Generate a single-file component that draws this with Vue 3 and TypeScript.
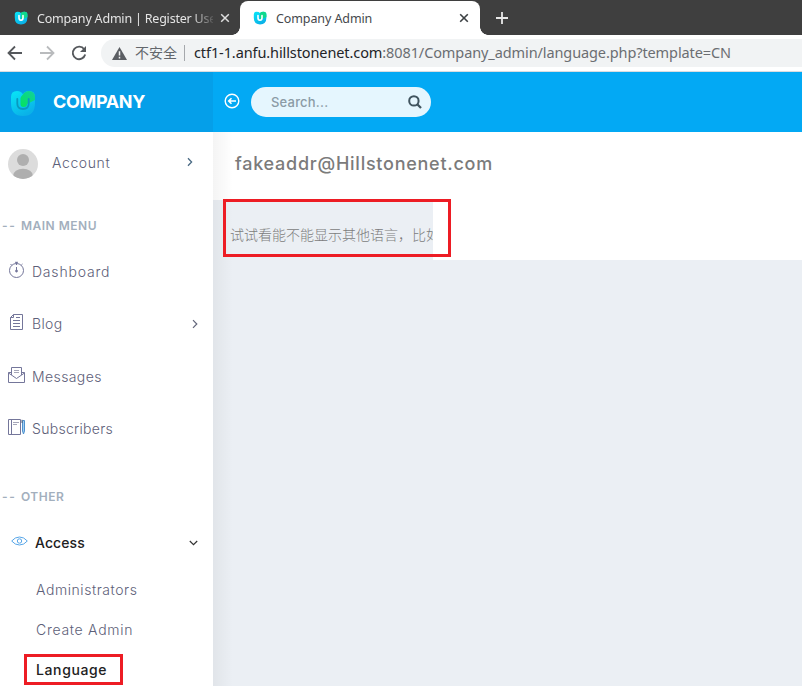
<script setup lang="ts">
interface MenuItem {
  label: string
  icon: 'clock' | 'doc' | 'mail' | 'book'
  cls: string
  arrow?: boolean
}

const mainMenu: MenuItem[] = [
  { label: 'Dashboard', icon: 'clock', cls: 't-dashboard' },
  { label: 'Blog', icon: 'doc', cls: 't-blog', arrow: true },
  { label: 'Messages', icon: 'mail', cls: 't-messages' },
  { label: 'Subscribers', icon: 'book', cls: 't-subscribers' },
]
</script>

<template>
  <div class="window">
    <svg class="defs" width="0" height="0">
      <defs>
        <linearGradient id="cup" x1="0" y1="0" x2="0.5" y2="1">
          <stop offset="0" stop-color="#08e6f7" />
          <stop offset="1" stop-color="#0ab2e8" />
        </linearGradient>
        <linearGradient id="leaf" x1="1" y1="0" x2="0" y2="1">
          <stop offset="0" stop-color="#13cf9e" />
          <stop offset="1" stop-color="#04e35c" />
        </linearGradient>
        <symbol id="fav" viewBox="0 0 14 14">
          <path d="M.8 3.5Q.8.8 3.6.8 6 .8 7 2 8 .8 10.5.8 13.4.8 13.4 3.6V6.5Q13.4 13.4 7 13.4T.8 6.5Z" fill="url(#cup)" />
          <path d="M7 2Q8 .8 10.5.8 13.4.8 13.4 4V6L9 8H7Z" fill="#10d98c" />
          <path d="M5 4.5V7Q5 9.2 7 9.2T9 7V4.5" fill="none" stroke="#fff" stroke-width="1.6" stroke-linecap="round" />
        </symbol>
      </defs>
    </svg>

    <header class="tabs">
      <div class="tab">
        <svg class="fav" width="14" height="14"><use href="#fav" /></svg>
        <span class="tab-title old">Company Admin | Register Use</span>
        <svg class="close" width="10" height="10" viewBox="0 0 10 10"><path d="M1.2 1.2 8.8 8.8M8.8 1.2 1.2 8.8" stroke="#dedede" stroke-width="1.5" /></svg>
      </div>
      <div class="tab active">
        <svg class="fav" width="14" height="14"><use href="#fav" /></svg>
        <span class="tab-title">Company Admin</span>
        <svg class="close" width="10" height="10" viewBox="0 0 10 10"><path d="M1.2 1.2 8.8 8.8M8.8 1.2 1.2 8.8" stroke="#3c4043" stroke-width="1.6" /></svg>
      </div>
      <svg class="plus" width="12" height="12" viewBox="0 0 12 12"><path d="M6 0V12M0 6H12" stroke="#e8e8e8" stroke-width="1.8" /></svg>
    </header>

    <div class="toolbar">
      <svg class="nav-icon" width="16" height="16" viewBox="0 0 16 16"><path d="M15 8H2M8 1.5 1.5 8 8 14.5" fill="none" stroke="#55585c" stroke-width="1.8" /></svg>
      <svg class="nav-icon" width="16" height="16" viewBox="0 0 16 16"><path d="M1 8H14M8 1.5 14.5 8 8 14.5" fill="none" stroke="#b9bbbd" stroke-width="1.8" /></svg>
      <svg class="nav-icon" width="16" height="16" viewBox="0 0 16 16"><path d="M13.2 4.2A6.3 6.3 0 1 0 14.2 9.6" fill="none" stroke="#55585c" stroke-width="1.9" /><path d="M15 1V7H9Z" fill="#55585c" /></svg>
      <div class="omnibox">
        <svg width="15" height="13" viewBox="0 0 15 13"><path d="M7.5 0 15 13H0Z" fill="#5b5e63" /><path d="M7.5 4.3V8.6M7.5 9.8V11.4" stroke="#f1f3f4" stroke-width="1.5" /></svg>
        <span class="insecure">不安全</span>
        <i class="divider"></i>
        <span class="url"><b>ctf1-1.anfu.hillstonenet.com</b>:8081/Company_admin/language.php?template=CN</span>
      </div>
    </div>

    <div class="app">
      <aside class="sidebar">
        <div class="brand">
          <svg width="26" height="27" viewBox="0 0 26 27">
            <path d="M1 7Q1 1 7 1 11.5 1 13 4.5 14.5 1 19 1 25 1 25 7V13Q25 26 13 26T1 13Z" fill="url(#cup)" />
            <path d="M13 4.5Q15 1 19 1 25 1 25 7.5V10L17 14Q17 17 13.5 17 10.5 17 10.5 14V8Q11 6 13 4.5Z" fill="url(#leaf)" />
            <path d="M7.3 9V13.5Q7.3 19 13 19T18.7 13.5V9" fill="none" stroke="#0999bf" stroke-width="1.8" stroke-linecap="round" />
          </svg>
          <span class="brand-name">COMPANY</span>
        </div>

        <div class="account">
          <svg width="30" height="30" viewBox="0 0 30 30">
            <clipPath id="face"><circle cx="15" cy="15" r="15" /></clipPath>
            <g clip-path="url(#face)"><rect width="30" height="30" fill="#dcdcdc" /><circle cx="15" cy="11" r="6" fill="#afafaf" /><ellipse cx="15" cy="27" rx="10" ry="7.3" fill="#afafaf" /></g>
          </svg>
          <span class="label t-account">Account</span>
          <svg class="chev acc" width="6" height="10" viewBox="0 0 6 10"><path d="M1 1.2 4.6 5 1 8.8" fill="none" stroke="#4a6a84" stroke-width="1.3" /></svg>
        </div>

        <h4 class="heading h-main"><span class="dashes">--</span>MAIN MENU</h4>
        <nav>
          <div v-for="item in mainMenu" :key="item.label" class="row">
            <svg class="icon" width="18" height="18" viewBox="0 0 18 18" fill="none" stroke="#74769a" stroke-width="1">
              <template v-if="item.icon === 'clock'">
                <circle cx="8.5" cy="9.5" r="7" /><path d="M8.5 1V4M7 1.3H10M8.5 6V11M2.5 3 3.8 4.3M14.5 3 13.2 4.3" /><circle cx="8.5" cy="10" r="1" />
              </template>
              <template v-else-if="item.icon === 'doc'">
                <path d="M5.5 1.5H14.5V16.5H2.5V4.5ZM5.5 1.5V4.5H2.5M5 7.5H12M5 10.5H12M5 13.5H12M8 4.5H12" />
              </template>
              <template v-else-if="item.icon === 'mail'">
                <path d="M3 6.5H.5V16.5H16.5V6.5H14M3.5 9V1.5H13.5V9M.5 7 8.5 12.5 16.5 7" /><path d="M6 4.5H11M6 6.5H11" stroke="#a5a6b8" />
              </template>
              <template v-else>
                <path d="M.5 1.5H12.5V16.5H.5ZM3.5 1.5V16.5" /><path d="M5 4.5H11M5 6.5H9" stroke="#a5a6b8" /><path d="M14.5 2.5H16.5V13L15.5 16 14.5 13Z" stroke="#4d92cf" fill="#a5cdf0" /><path d="M14 1.8V5" stroke="#555b73" />
              </template>
            </svg>
            <span class="label" :class="item.cls">{{ item.label }}</span>
            <svg v-if="item.arrow" class="chev" width="6" height="10" viewBox="0 0 6 10"><path d="M1 1.2 4.8 5 1 8.8" fill="none" stroke="#62657a" stroke-width="1.2" /></svg>
          </div>
        </nav>

        <h4 class="heading h-other"><span class="dashes">--</span>OTHER</h4>
        <div class="row access">
          <svg width="17" height="10" viewBox="0 0 17 10" fill="none" stroke="#58a6e8"><path d="M.7 5Q4 1 8.5 1T16.3 5Q13 9 8.5 9T.7 5Z" /><circle cx="8.5" cy="5" r="2.2" /></svg>
          <span class="label strong t-access">Access</span>
          <svg class="chev down" width="9" height="6" viewBox="0 0 9 6"><path d="M.8 1 4.5 4.7 8.2 1" fill="none" stroke="#333" stroke-width="1.2" /></svg>
        </div>
        <div class="sub"><span class="label t-administrators">Administrators</span></div>
        <div class="sub"><span class="label t-create">Create Admin</span></div>
        <div class="sub">
          <span class="label strong t-language">Language</span>
          <i class="mark mark-language"></i>
        </div>
      </aside>

      <main class="main">
        <div class="topbar">
          <svg width="16" height="16" viewBox="0 0 16 16" fill="none" stroke="#fff" stroke-width="1.4"><circle cx="8" cy="8" r="6.8" /><path d="M12 8H5M7.5 5.2 4.7 8 7.5 10.8" stroke-width="1.6" /></svg>
          <div class="search">
            <span>Search...</span>
            <svg width="14" height="14" viewBox="0 0 14 14" fill="none" stroke="#40545f" stroke-width="2"><circle cx="5.9" cy="5.9" r="4.7" /><path d="M9.3 9.3 13 13" stroke-width="2.3" /></svg>
          </div>
        </div>
        <div class="content">
          <div class="title"><span>fakeaddr@Hillstonenet.com</span></div>
          <div class="strip">
            <div class="message">试试看能不能显示其他语言，比如</div>
            <i class="mark mark-message"></i>
          </div>
        </div>
      </main>
    </div>
  </div>
</template>

<style>
body { background: #ebeff4; overflow: hidden; }
</style>

<style scoped>
* { box-sizing: border-box; }
.window { width: 802px; height: 686px; overflow: hidden; display: flex; flex-direction: column; font-family: Inter, "Noto Sans CJK SC", sans-serif; }
.defs { position: absolute; }
.tabs { height: 35px; flex: none; background: #3f3f3f; display: flex; align-items: flex-end; }
.tab { width: 240px; height: 34px; display: flex; align-items: center; padding: 0 11px 0 13px; color: #e4e4e4; }
.tab:first-child { padding-left: 14px; padding-right: 10px; }
.tab-title { flex: 1; margin-left: 9px; padding-top: 2px; font: 12.5px/20px "Noto Sans", sans-serif; letter-spacing: -.1px; white-space: nowrap; overflow: hidden; }
.tab-title.old { letter-spacing: -.2px; -webkit-mask-image: linear-gradient(90deg, #000 88%, transparent 102%); mask-image: linear-gradient(90deg, #000 88%, transparent 102%); }
.close { margin-left: 7px; flex: none; }
.tab.active { position: relative; background: #fff; color: #45484c; border-radius: 8px 8px 0 0; }
.tab.active::before, .tab.active::after { content: ""; position: absolute; bottom: 0; width: 8px; height: 8px; }
.tab.active::before { left: -8px; background: radial-gradient(circle at 0 0, transparent 7.5px, #fff 8px); }
.tab.active::after { right: -8px; background: radial-gradient(circle at 100% 0, transparent 7.5px, #fff 8px); }
.plus { margin: 0 0 11px 16px; }
.toolbar { height: 37px; flex: none; background: #fff; border-bottom: 1px solid #dadce0; display: flex; align-items: center; padding-left: 7px; }
.nav-icon { margin-right: 16px; flex: none; }
.omnibox { height: 28px; flex: 1; margin-left: -2px; background: #f1f3f4; border-radius: 14px 0 0 14px; display: flex; align-items: center; padding-left: 11px; white-space: nowrap; }
.insecure { margin: -2px 0 0 8px; font: 14px/20px "Noto Sans CJK SC", sans-serif; color: #63676c; }
.divider { width: 1px; height: 16px; background: #a5a8ac; margin: 0 9px 0 7px; }
.url { margin-top: -2px; font: 14.5px/20px "Noto Sans", sans-serif; color: #6b6e72; letter-spacing: -.1px; }
.url b { color: #222427; font-weight: 400; }
.app { flex: 1; min-height: 0; display: flex; }
.sidebar { width: 213px; flex: none; background: #fff; overflow: hidden; }
.brand { height: 60px; background: #059fe9; display: flex; align-items: center; padding: 3px 0 0 10px; }
.brand-name { margin: -3px 0 0 17px; color: #fff; font-size: 18px; font-weight: 700; letter-spacing: -.35px; line-height: 24px; }
.account { height: 62px; display: flex; align-items: center; padding: 2px 20px 0 8px; }
.account .label { margin: -2px 0 0 14px; }
.label { font-size: 14px; line-height: 22px; font-weight: 300; color: #5d6078; white-space: nowrap; }
.label.strong { color: #212121; font-weight: 500; }
.t-account { letter-spacing: .6px; }
.t-dashboard { letter-spacing: .8px; }
.t-blog { letter-spacing: .35px; }
.t-messages { letter-spacing: .4px; }
.t-subscribers { letter-spacing: .3px; }
.t-access { letter-spacing: .1px; }
.t-administrators { letter-spacing: .57px; }
.t-create { letter-spacing: .72px; }
.t-language { letter-spacing: .62px; }
.chev { margin-left: auto; }
.chev.acc { margin-top: -4px; }
.heading { margin: 11px 0 0; height: 41px; padding-left: 2px; font-size: 12px; line-height: 41px; font-weight: 600; color: #a3afbd; letter-spacing: .5px; }
.dashes { display: inline-block; width: 19px; letter-spacing: 1.6px; }
.row { height: 52.3px; display: flex; align-items: center; padding: 0 15px 0 8px; }
.icon { margin: -4px 6px 0 0; flex: none; }
.h-other { margin-top: 21px; }
.access { padding-left: 11px; }
.access > svg:first-child { margin: -4px 7px 0 0; }
.access + .sub { margin-top: 1px; }
.sub { position: relative; height: 40px; display: flex; align-items: center; padding-left: 36px; }
.main { flex: 1; position: relative; background: #ebeff4; }
.main::after { content: ""; position: absolute; top: 60px; bottom: 0; left: 0; width: 20px; background: linear-gradient(90deg, rgba(0,0,0,.045), transparent); }
.topbar { height: 60px; background: #03a9f4; display: flex; align-items: center; padding: 0 0 0 11px; }
.topbar > svg { margin: -3px 11px 0 0; }
.search { width: 180px; height: 30px; border-radius: 15px; background: #e5f6fe; display: flex; align-items: center; justify-content: space-between; padding: 0 9px 0 20px; color: #8b9ba5; font-size: 13px; font-weight: 500; letter-spacing: .2px; }
.search span { line-height: 20px; margin-top: -1px; }
.title { height: 68px; background: #fff; padding: 18px 0 0 22px; color: #7b7b7b; font-size: 18px; line-height: 28px; font-weight: 500; letter-spacing: .74px; }
.strip { position: relative; height: 60px; background: #fff; }
.message { width: 220px; height: 60px; background: #ebeff4; padding: 23px 0 0 17px; font: 14px/22px "Noto Sans CJK SC", sans-serif; font-weight: 300; color: #7c7c7c; white-space: nowrap; overflow: hidden; }
.mark { position: absolute; border: 3px solid #ed1c24; z-index: 2; }
.mark-message { left: 10px; top: -1px; width: 228px; height: 58px; }
.mark-language { left: 24px; top: 4px; width: 99px; height: 31px; }
</style>
